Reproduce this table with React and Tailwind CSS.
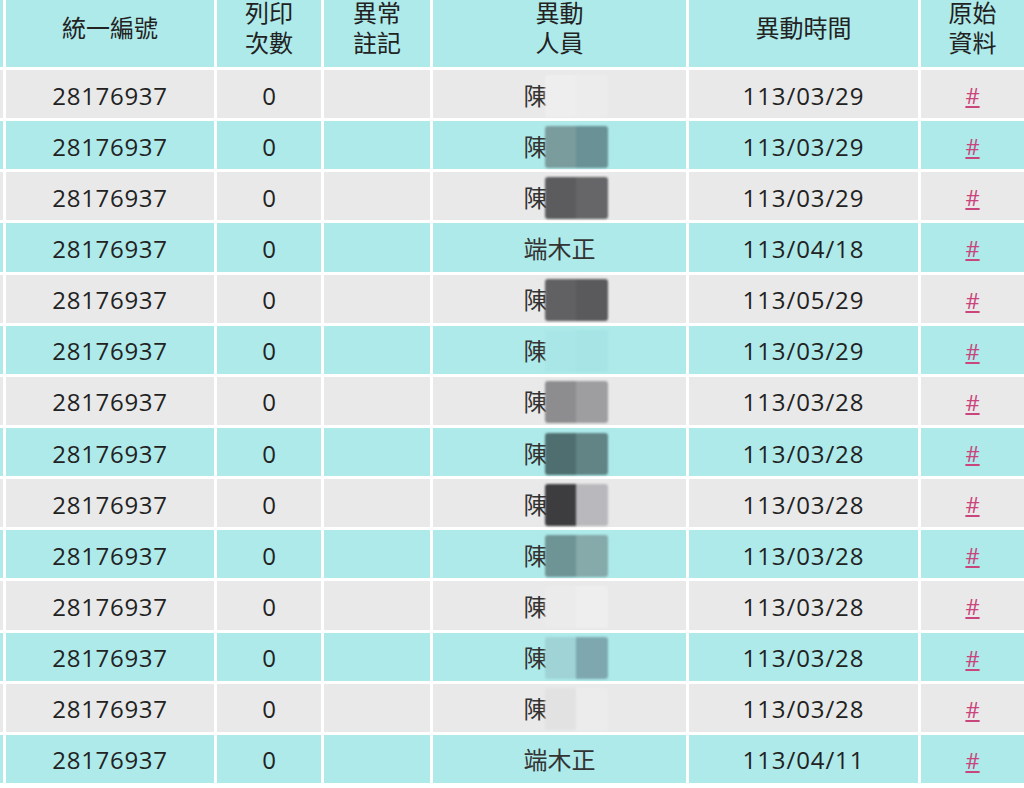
const CYAN = "bg-[#aeeaea]";
const GRAY = "bg-[#e9e9e9]";

const rows = [
  { name: "陳", mask: ["#eeeeee", "#ececec"], date: "113/03/29" },
  { name: "陳", mask: ["#7b9c9d", "#6a9195"], date: "113/03/29" },
  { name: "陳", mask: ["#5c5c5e", "#666668"], date: "113/03/29" },
  { name: "端木正", mask: null, date: "113/04/18" },
  { name: "陳", mask: ["#616163", "#5a5a5c"], date: "113/05/29" },
  { name: "陳", mask: ["#a9e6e7", "#a6e4e5"], date: "113/03/29" },
  { name: "陳", mask: ["#8d8d8f", "#9e9ea0"], date: "113/03/28" },
  { name: "陳", mask: ["#4f6e6f", "#628485"], date: "113/03/28" },
  { name: "陳", mask: ["#3d3d3f", "#b9b9bd"], date: "113/03/28" },
  { name: "陳", mask: ["#6f9495", "#86a9aa"], date: "113/03/28" },
  { name: "陳", mask: ["#ebebeb", "#eeeeee"], date: "113/03/28" },
  { name: "陳", mask: ["#9fd3d5", "#7ea7b0"], date: "113/03/28" },
  { name: "陳", mask: ["#e2e2e2", "#ececec"], date: "113/03/28" },
  { name: "端木正", mask: null, date: "113/04/11" },
];

function HeadCell({ children }) {
  return (
    <div className={`${CYAN} flex flex-col items-center justify-center pb-[11px] leading-[30px] text-[24px] text-[#222]`}>
      {children}
    </div>
  );
}

function Mask({ colors }) {
  return (
    <span className="relative inline-block w-[48px] h-[30px] align-middle">
      <span className="absolute -left-[3px] -top-[6px] h-[42px] w-[63px] flex rounded-[3px] overflow-hidden blur-[1px]">
        <span className="flex-1" style={{ background: colors[0] }}></span>
        <span className="flex-1" style={{ background: colors[1] }}></span>
      </span>
    </span>
  );
}

export default function App() {
  return (
    <div
      className="w-[1024px] h-[788px] bg-white overflow-hidden"
      style={{ fontFamily: "'Open Sans', 'Noto Sans CJK TC', sans-serif" }}
    >
      <div className="grid grid-cols-[3px_208px_104px_106px_253px_229px_103px] grid-rows-[67px] auto-rows-[48.15px] gap-[3px]">
        <div className={CYAN}></div>
        <HeadCell>統一編號</HeadCell>
        <HeadCell>
          <span>列印</span>
          <span>次數</span>
        </HeadCell>
        <HeadCell>
          <span>異常</span>
          <span>註記</span>
        </HeadCell>
        <HeadCell>
          <span>異動</span>
          <span>人員</span>
        </HeadCell>
        <HeadCell>異動時間</HeadCell>
        <HeadCell>
          <span>原始</span>
          <span>資料</span>
        </HeadCell>

        {rows.map((row, i) => {
          const bg = i % 2 === 0 ? GRAY : CYAN;
          const cell = `${bg} flex items-center justify-center text-[24px] text-[#222] pt-[3px]`;
          return [
            <div key={`s${i}`} className={bg}></div>,
            <div key={`a${i}`} className={`${cell} tracking-[0.7px]`}>28176937</div>,
            <div key={`b${i}`} className={cell}>0</div>,
            <div key={`c${i}`} className={cell}></div>,
            <div key={`d${i}`} className={cell}>
              <span className="text-[#333]">{row.name}</span>
              {row.mask && <Mask colors={row.mask} />}
            </div>,
            <div key={`e${i}`} className={`${cell} tracking-[0.9px]`}>{row.date}</div>,
            <div key={`f${i}`} className={cell}>
              <a href="#" className="text-[22px] text-[#c9457c] underline underline-offset-2">#</a>
            </div>,
          ];
        })}
      </div>
    </div>
  );
}
